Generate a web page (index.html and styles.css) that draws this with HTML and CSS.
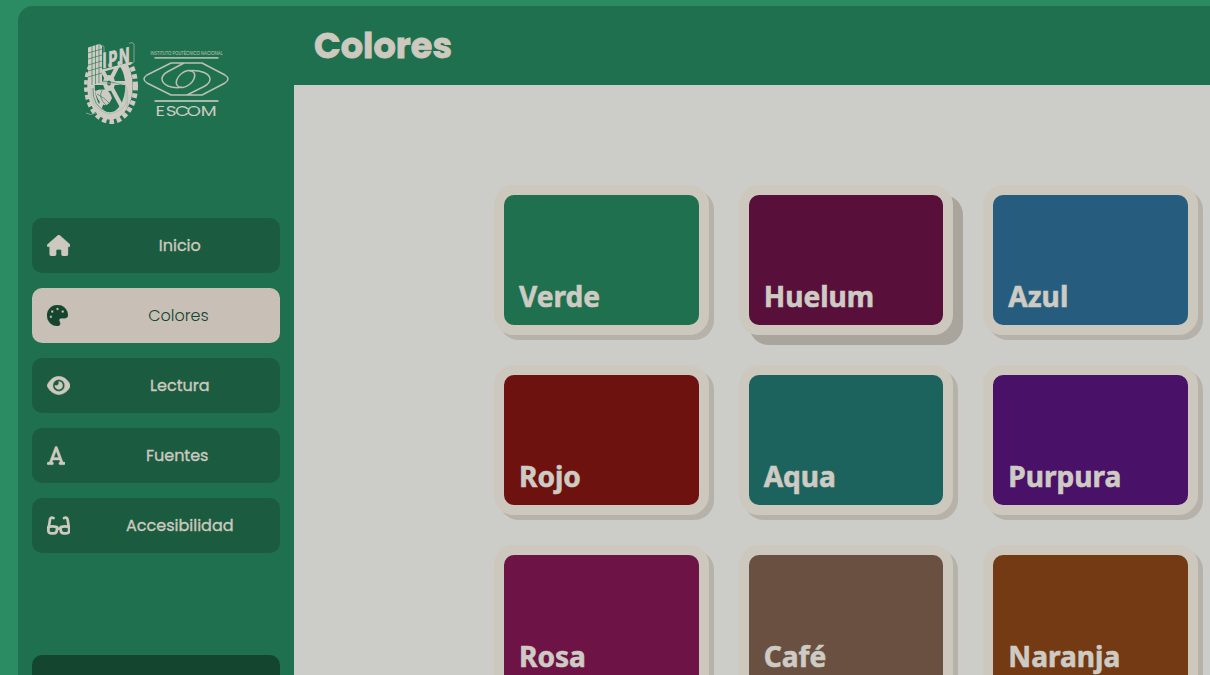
FILE: index.html
```html
<!DOCTYPE html>
<html lang="es">
<head>
<meta charset="utf-8">
<title>Colores</title>
<link rel="stylesheet" href="styles.css">
</head>
<body>
<div class="app">
  <aside class="sidebar">
    <svg class="logo" viewBox="75 35 165 100" aria-label="IPN ESCOM">
      <ellipse class="gear-teeth" cx="111" cy="86" rx="24.500" ry="35.500"/>
      <ellipse class="gear-rim" cx="110" cy="86" rx="19" ry="30"/>
      <path class="gear-spokes" d="M109 83L98 62M109 83L120 61M109 83H129M109 83L122 107M109 83L99 110M109 83H90"/>
      <ellipse class="gear-hub" cx="109" cy="83" rx="6" ry="8"/>
      <ellipse class="gear-hole" cx="109" cy="83" rx="2" ry="2.600"/>
      <path class="light" d="M95 91Q109 86 112 98Q108 108 102 104Q97 100 95 91Z"/>
      <path class="dark-line" d="M97 94Q105 98 109 103M102 90Q98 98 106 105M93 88Q92 107 108 112M90 83Q104 78 125 86"/>
      <path class="light-line" d="M86 83Q91 80 99 82T125 83M91 88Q89 108 108 114Q122 112 126 104V87M86 113Q90 116 96 113M125 84Q129 91 127 109"/>
      <path class="dark" d="M102 48L132 41V62L102 70Z"/>
      <path class="light" d="M88 47.500L99 44L102 46V82L88 86ZM102 69.500L131 62V64.500L102 72Z"/>
      <path class="dark-line" d="M92 46V85M95.500 45V84M99 44V83M88 53L102 49M88 59L102 55M88 65L102 61M88 71L102 67M88 77L102 73"/>
      <path class="light-line" d="M129 43.500L132 42.500L134 44V62L131 64M99 44L104 46.500V52"/>
      <g transform="translate(102 69) skewY(-13) scale(.62 1)"><text class="ipn" x="1 8 10.500 23 27.500">I.P.N</text></g>
      <text class="institute" x="150.500" y="55" textLength="72" lengthAdjust="spacingAndGlyphs">INSTITUTO POLITÉCNICO NACIONAL</text>
      <path class="rule" d="M154.500 57.800H218.500M154.500 101H218.500"/>
      <path class="emblem" d="M171 63H202L225 75Q231 79 225 83L202 95H171L147 83Q141 79 147 75ZM184 63L168 71.500C160 76 160 82 168 86Q174 88.500 182 87.300M187 95L204 86.500C212 82 212 76 204 72.500Q198 70 189 70.700"/>
      <ellipse class="emblem" cx="185.500" cy="79" rx="10.500" ry="6.800" transform="rotate(-39 185.500 79)"/>
      <g transform="translate(155.500 115.800) scale(1.230 1)"><text class="escom" x="0 8.300 15.800 25.200 36.800">ESCOM</text></g>
    </svg>
    <nav class="menu">
      <a class="item"><svg class="icon" viewBox="0 0 576 512"><path d="M575.8 255.500c0 18-15 32.100-32 32.100h-32l.7 160.200c0 2.700-.2 5.400-.5 8.100V472c0 22.100-17.900 40-40 40H392c-22.100 0-40-17.900-40-40V384c0-17.700-14.300-32-32-32H256c-17.700 0-32 14.300-32 32v88c0 22.100-17.900 40-40 40H104c-22.100 0-40-17.900-40-40V287.600H32c-18 0-32-14-32-32.100c0-9 3-17 10-24L266.400 8c7-7 15-8 22-8s15 2 21 7L564.800 231.500c8 7 12 15 11 24z"/></svg><span class="label">Inicio</span></a>
      <a class="item active"><svg class="icon palette" viewBox="0 0 512 512"><path d="M512 256c0 .9 0 1.800 0 2.700c-.4 36.500-33.600 61.300-70.100 61.300H344c-26.500 0-48 21.500-48 48c0 3.400 .4 6.700 1 9.900c2.100 10.200 6.500 20 10.800 29.900c6.100 13.800 12.100 27.500 12.100 42c0 31.800-21.600 60.700-53.400 62c-3.500 .1-7 .2-10.600 .2C114.600 512 0 397.400 0 256S114.600 0 256 0S512 114.600 512 256zM128 288a32 32 0 1 0 -64 0 32 32 0 1 0 64 0zm0-96a32 32 0 1 0 0-64 32 32 0 1 0 0 64zM288 96a32 32 0 1 0 -64 0 32 32 0 1 0 64 0zm96 96a32 32 0 1 0 0-64 32 32 0 1 0 0 64z"/></svg><span class="label">Colores</span></a>
      <a class="item"><svg class="icon" viewBox="0 0 576 512"><path d="M288 32c-80.800 0-145.500 36.800-192.600 80.600C48.600 156 17.300 208 2.500 243.700c-3.300 7.900-3.300 16.700 0 24.600C17.300 304 48.600 356 95.400 399.400C142.500 443.200 207.200 480 288 480s145.500-36.800 192.600-80.600c46.800-43.500 78.100-95.400 93-131.100c3.300-7.900 3.300-16.700 0-24.600c-14.900-35.700-46.200-87.700-93-131.100C433.500 68.800 368.800 32 288 32zM144 256a144 144 0 1 1 288 0 144 144 0 1 1 -288 0zm144-64c0 35.300-28.700 64-64 64c-7.100 0-13.900-1.200-20.300-3.300c-5.500-1.800-11.900 1.600-11.700 7.400c.3 6.900 1.300 13.800 3.200 20.700c13.700 51.200 66.400 81.600 117.600 67.900s81.600-66.400 67.900-117.600c-11.100-41.500-47.800-69.400-88.600-71.100c-5.800-.2-9.200 6.100-7.400 11.700c2.100 6.400 3.300 13.200 3.300 20.300z"/></svg><span class="label">Lectura</span></a>
      <a class="item"><svg class="icon letter" viewBox="0 0 448 512"><path d="M254 52.800C249.300 40.300 237.300 32 224 32s-25.300 8.300-30 20.800L57.800 416H32c-17.700 0-32 14.300-32 32s14.300 32 32 32h96c17.700 0 32-14.300 32-32s-14.300-32-32-32h-1.800l18-48H303.800l18 48H320c-17.700 0-32 14.300-32 32s14.300 32 32 32h96c17.700 0 32-14.300 32-32s-14.300-32-32-32H390.200L254 52.800zM279.800 304H168.200L224 155.100 279.800 304z"/></svg><span class="label">Fuentes</span></a>
      <a class="item"><svg class="icon" viewBox="0 0 576 512"><path class="glasses" d="M32 370L75 100Q87 55 130 65L160 74M544 370L501 100Q489 55 446 65L416 74M32 370V295Q130 260 242 296V360Q242 448 160 448H114Q32 448 32 370ZM544 370V295Q446 260 334 296V360Q334 448 416 448H462Q544 448 544 370ZM242 330H334"/></svg><span class="label">Accesibilidad</span></a>
    </nav>
    <div class="footer-item"></div>
  </aside>
  <main class="main">
    <header class="header"><h1 class="title">Colores</h1></header>
    <section class="grid">
      <div class="card verde">Verde</div>
      <div class="card huelum raised">Huelum</div>
      <div class="card azul">Azul</div>
      <div class="card rojo">Rojo</div>
      <div class="card aqua">Aqua</div>
      <div class="card purpura">Purpura</div>
      <div class="card rosa">Rosa</div>
      <div class="card cafe">Café</div>
      <div class="card naranja">Naranja</div>
    </section>
  </main>
</div>
</body>
</html>
```
FILE: styles.css
```css
* { box-sizing: border-box; }
body {
  margin: 0;
  height: 675px;
  overflow: hidden;
  padding: 6px 0 0 18px;
  background: #2b8b62;
  font-family: Poppins, Inter, sans-serif;
}
.app {
  display: flex;
  height: 669px;
  background: #1f704e;
  border-radius: 15px 0 0 0;
  overflow: hidden;
}
.sidebar {
  width: 276px;
  flex: none;
  padding: 29px 14px 0;
  display: flex;
  flex-direction: column;
}
.logo { width: 165px; height: 100px; margin-left: 43px; flex: none; }
.light { fill: #cdcbc3; }
.dark { fill: #1f704e; }
.dark-line { fill: none; stroke: #1f704e; stroke-width: .6; }
.light-line { fill: none; stroke: #a9b9a7; stroke-width: .7; }
.gear-teeth { fill: none; stroke: #cdcbc3; stroke-width: 5; stroke-dasharray: 4.500 2.900; }
.gear-rim { fill: none; stroke: #cdcbc3; stroke-width: 7.500; }
.gear-spokes { fill: none; stroke: #cdcbc3; stroke-width: 4; }
.gear-hub { fill: #cdcbc3; }
.gear-hole { fill: #1f704e; }
.ipn { font: 900 22px Inter, sans-serif; fill: #cdcbc3; }
.institute { font: 4.500px Poppins, Inter, sans-serif; fill: #c3c6bb; }
.rule { stroke: #a9b9a7; stroke-width: 1.800; }
.emblem { fill: none; stroke: #b9c1b3; stroke-width: 1.500; stroke-linejoin: round; }
.escom { font: 15px Poppins, Inter, sans-serif; fill: #cdcbc3; }
.menu { margin-top: 83px; display: grid; gap: 15px; flex: none; }
.item {
  height: 55px;
  padding: 0 14px 0 14.500px;
  border-radius: 10px;
  display: flex;
  align-items: center;
  background: #1b5c41;
  color: #cdc9bf;
  font-size: 16px;
  font-weight: 400;
  -webkit-text-stroke: .35px currentColor;
}
.item.active { background: #c8c0b7; color: #14452f; font-weight: 300; -webkit-text-stroke: 0; }
.icon { width: 23.600px; height: 21px; flex: none; fill: currentColor; }
.palette { width: 21px; }
.letter { width: 18.400px; }
.icon path:not(.glasses) { stroke: currentColor; stroke-width: 8; }
.glasses { fill: none; stroke: currentColor; stroke-width: 66; stroke-linecap: round; stroke-linejoin: round; }
.label { flex: 1; text-align: center; padding-left: 23.500px; line-height: 24px; }
.footer-item { height: 20px; margin-top: 102px; flex: none; border-radius: 10px 10px 0 0; background: #14452f; }
.main { flex: 1; display: flex; flex-direction: column; min-height: 0; }
.header { height: 79px; flex: none; padding: 0 20px; display: flex; align-items: center; }
.title { margin: 0; font-size: 35.100px; line-height: 54px; font-weight: 700; color: #cdc9bf; -webkit-text-stroke: .8px currentColor; }
.grid {
  flex: 1;
  min-height: 0;
  overflow: hidden;
  padding: 100px 12px 0 200px;
  background: #cccdc8;
  display: grid;
  grid-template-columns: repeat(3, 1fr);
  grid-template-rows: 150px 150px 130px;
  gap: 30px;
}
.card {
  border: 10px solid #cdc8bd;
  border-radius: 20px;
  box-shadow: 5px 5px 0 #b7b2a9;
  height: 150px;
  padding: 0 15px 8px;
  display: flex;
  align-items: flex-end;
  font: 700 28.100px/42px "Noto Sans", sans-serif;
  -webkit-text-stroke: .6px currentColor;
  color: #cdcbc3;
}
.raised { box-shadow: 10px 10px 0 #aaa59c; }
.verde { background: #1f704e; }
.huelum { background: #580f3a; }
.azul { background: #265d7e; }
.rojo { background: #6d120f; }
.aqua { background: #1d635d; }
.purpura { background: #4a1168; }
.rosa { background: #6d1346; }
.cafe { background: #695040; }
.naranja { background: #743a14; }
```
